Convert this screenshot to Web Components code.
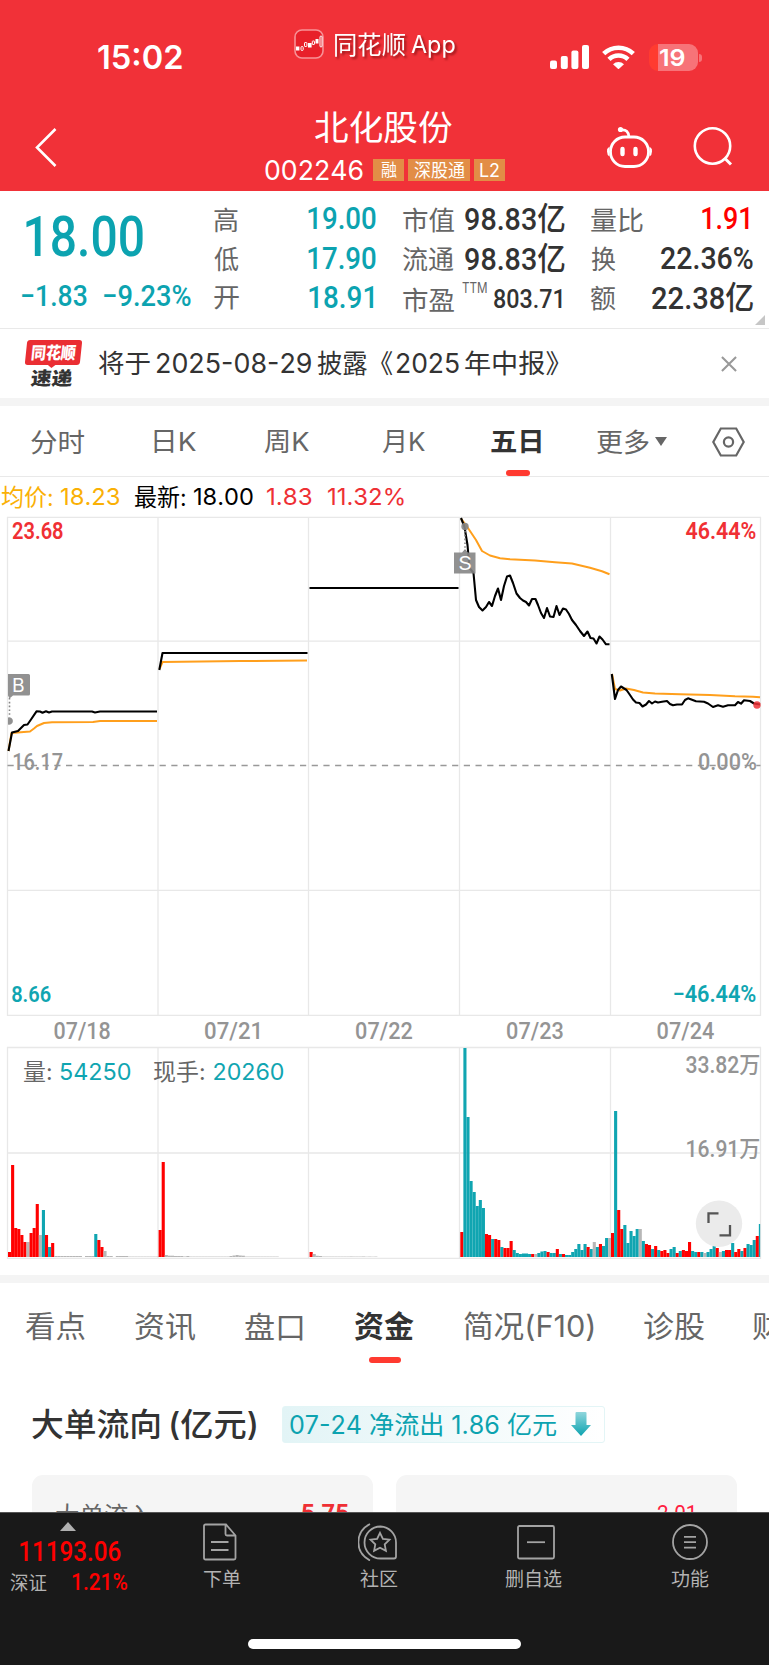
<!DOCTYPE html>
<html lang="zh-CN">
<head>
<meta charset="utf-8">
<title>北化股份 002246</title>
<style>
html,body{margin:0;padding:0;background:#fff}
body{width:769px;font-family:Inter,"Noto Sans CJK SC",sans-serif;color:#333}
</style>
</head>
<body>
<stock-app></stock-app>
<script>
const FONTS = {
  ui: 'Inter, "Noto Sans CJK SC", sans-serif',
  din: 'Roboto, "Noto Sans CJK SC", sans-serif'
};
const ctx = document.createElement('canvas').getContext('2d');
ctx.fontKerning = 'none';

function define(name, html) {
  const tpl = document.createElement('template');
  tpl.innerHTML = html;
  customElements.define(name, class extends HTMLElement {
    constructor() {
      super();
      this.attachShadow({mode: 'open'}).appendChild(tpl.content.cloneNode(true));
    }
  });
}

/* A single line of text whose box is exactly its ink: s = font size, w = ink width,
   f = face, b = weight, ml / mr / mt = margins. Colour is inherited. */
customElements.define('fit-text', class extends HTMLElement {
  connectedCallback() {
    if (this.shadowRoot) return;
    const a = (n, d) => this.getAttribute(n) ?? d;
    const size = +a('s', 24), weight = a('b', '400'), family = FONTS[a('f', 'ui')];
    const text = this.getAttribute('t');
    ctx.font = `${weight} ${size}px ${family}`;
    const m = ctx.measureText(text);
    const left = -m.actualBoundingBoxLeft, ink = m.actualBoundingBoxRight - left;
    const w = +a('w', ink), k = w / ink;
    const up = m.actualBoundingBoxAscent, h = up + m.actualBoundingBoxDescent;
    this.attachShadow({mode: 'open'}).innerHTML = `
      <style>
        :host{display:block;flex:none;width:${w}px;height:${h}px;margin-left:${a('ml', 0)}px;margin-right:${a('mr', 0)}px;margin-top:${a('mt', 0)}px}
        svg{display:block;overflow:visible}
        text{font:${weight} ${size}px ${family};font-kerning:none;fill:currentColor;white-space:pre}
      </style>
      <svg width="${w}" height="${h}"><text transform="translate(${-left * k} ${up}) scale(${k} 1)">${text}</text></svg>`;
    /* correct for any difference between the canvas advance and the laid-out one */
    const el = this.shadowRoot.querySelector('text');
    const adv = el.getComputedTextLength();
    if (adv) {
      const k2 = w / (ink + adv - m.width);
      el.setAttribute('transform', `translate(${-left * k2} ${up}) scale(${k2} 1)`);
    }
  }
});

define('status-bar', `
<style>
:host{display:flex;height:96px;color:#fff;align-items:flex-start}
.row{display:flex;align-items:center;height:30px}
.app{margin:29px 0 0 112px}
.app fit-text{filter:drop-shadow(2px 2px 1px rgba(80,0,0,.55))}
.time{margin:42px 0 0 98px}
.sys{margin:42px 0 0 95px}
svg{display:block;flex:none}
.bat{position:relative;width:49px;height:27px;border-radius:9px;margin-left:13.500px;display:flex;align-items:center;
 background:linear-gradient(90deg,#ff3b30 9px,#f77378 9px)}
.bat::after{content:"";position:absolute;left:50.5px;top:10px;width:2.5px;height:8px;border-radius:0 3px 3px 0;background:#f77378}
</style>
<div class="row time"><fit-text t="15:02" s="33" w="84" b="600"></fit-text></div>
<div class="row app">
 <svg width="30" height="30" viewBox="0 0 30 30"><rect x="1" y="1" width="28" height="28" rx="7" fill="#e8202a" stroke="#f79297" stroke-width="1.6"/>
 <g fill="#fff"><rect x="2" y="17.5" width="3.4" height="4"/><rect x="14" y="14" width="3.6" height="4.5"/><rect x="21.5" y="10" width="3" height="4.5"/></g>
 <g fill="none" stroke="#fff" stroke-width="1"><rect x="7" y="17.5" width="2.2" height="4" rx="1"/><rect x="10.5" y="13.5" width="2.4" height="4" rx=".6"/><rect x="18.3" y="12" width="2.2" height="3.5" rx=".6"/><rect x="26" y="7" width="2" height="11" rx="1"/></g></svg>
 <fit-text t="同花顺" s="25" w="70" ml="11" mt="0"></fit-text><fit-text t="App" s="24" w="44" ml="5.500" mt="5"></fit-text>
</div>
<div class="row sys">
 <svg width="39" height="24" viewBox="0 0 39 24" fill="#fff"><rect y="15.5" width="7" height="8.5" rx="2"/><rect x="10.8" y="11" width="7" height="13" rx="2"/><rect x="21.4" y="5.5" width="7" height="18.500" rx="2"/><rect x="32" width="7" height="24" rx="2"/></svg>
 <svg width="33" height="24" viewBox="0 0 33 24" style="margin-left:13.500px" fill="none" stroke="#fff" stroke-width="4.600"><path d="M1.700 8.600a21.500 21.500 0 0 1 29.600 0M7 14.300a13.600 13.600 0 0 1 19 0"/><path d="M11 19.200a8 8 0 0 1 11 0L16.500 24.300z" fill="#fff" stroke="none"/></svg>
 <div class="bat"><fit-text t="19" s="22.500" w="25" b="600" ml="11.500"></fit-text></div>
</div>`);

define('title-bar', `
<style>
:host{display:flex;height:95px;color:#fff}
svg{display:block;flex:none}
.back{margin:32px 0 0 35px}
.mid{width:260px;margin-left:206px;flex:none}
.t{display:flex;height:32px;margin-top:14.500px;align-items:center;justify-content:center;padding-right:19px}
.c{display:flex;height:22px;margin-top:16px;align-items:center}
.tag{height:22px;display:flex;align-items:center;justify-content:center;background:#e28d46;margin-left:4px;flex:none}
.bot{margin:30px 0 0 82.500px}
.find{margin:31px 0 0 41px}
</style>
<svg class="back" width="22" height="39" viewBox="0 0 22 39" fill="none" stroke="#fff" stroke-width="2.600"><path d="M20.500 1L2 19.500 20.500 38"/></svg>
<div class="mid">
 <div class="t"><fit-text t="北化股份" s="34.500" w="137"></fit-text></div>
 <div class="c"><fit-text t="002246" s="27.500" w="98" ml="2"></fit-text>
  <div class="tag" style="width:31px;margin-left:10px"><fit-text t="融" s="17" w="16"></fit-text></div>
  <div class="tag" style="width:62px"><fit-text t="深股通" s="18" w="51"></fit-text></div>
  <div class="tag" style="width:31px"><fit-text t="L2" s="18" w="19"></fit-text></div></div>
</div>
<svg class="bot" width="46" height="42" viewBox="0 0 46 42" fill="none" stroke="#fff" stroke-width="2.800"><rect x="4.500" y="11" width="38" height="29.500" rx="14.500"/><path d="M3.500 20.500q-2.500 1.500-2.500 5t2.500 5zM43.500 20.500q2.500 1.500 2.500 5t-2.500 5z" fill="#fff" stroke="none"/><path d="M15 4q7.500-1 8 7"/><circle cx="14.500" cy="3.500" r="2.600" fill="#fff" stroke="none"/><path d="M16.500 23v5M29.500 23v5" stroke-width="4.400" stroke-linecap="round"/></svg>
<svg class="find" width="40" height="40" viewBox="0 0 40 40" fill="none" stroke="#fff" stroke-width="2.600"><circle cx="19.500" cy="19" r="17.700"/><path d="M31.500 31l6.500 6.500" stroke-width="3"/></svg>`);

define('quote-panel', `
<style>
:host{display:flex;border-bottom:1.5px solid #e9e9e9;position:relative;color:#666;box-sizing:border-box;height:138px}
.main{width:214px;color:#0ca3b0}
.p{height:40px;margin:25px 0 0 26px;display:flex;align-items:center}
.d{height:22px;margin:28px 0 0 22px;display:flex;align-items:center}
.col{width:163px;padding-top:9px;margin-right:26px;flex:none}
.r{height:39.300px;display:flex;align-items:center;justify-content:space-between}
.up{color:#f00}.dn{color:#0ca3b0}.k{color:#333}
.corner{position:absolute;right:4px;bottom:3px;border:5px solid #c6c6c6;border-left-color:transparent;border-top-color:transparent}
</style>
<div class="main"><div class="p"><fit-text t="18.00" s="55" w="117" b="500" f="din"></fit-text></div>
<div class="d"><fit-text t="−1.83" s="29.500" w="65" b="500" f="din"></fit-text><fit-text t="−9.23%" s="29.500" w="87" b="500" f="din" ml="17"></fit-text></div></div>
<div class="col">
 <div class="r"><fit-text t="高" s="26" w="24"></fit-text><fit-text class="dn" t="19.00" s="31.500" w="68" b="500" f="din" mt="-3" mr="1"></fit-text></div>
 <div class="r"><fit-text t="低" s="26" w="25"></fit-text><fit-text class="dn" t="17.90" s="31.500" w="68" b="500" f="din" mt="-2" mr="1"></fit-text></div>
 <div class="r"><fit-text t="开" s="26" w="25"></fit-text><fit-text class="dn" t="18.91" s="31.500" w="64" b="500" f="din" mt="-3" mr="4.500"></fit-text></div>
</div>
<div class="col" style="width:162px">
 <div class="r"><fit-text t="市值" s="26" w="51"></fit-text><fit-text class="k" t="98.83亿" s="31.500" w="99.500" b="500" f="din" mt="-3" mr=".5"></fit-text></div>
 <div class="r"><fit-text t="流通" s="26" w="51"></fit-text><fit-text class="k" t="98.83亿" s="31.500" w="99.500" b="500" f="din" mt="-2" mr=".5"></fit-text></div>
 <div class="r"><fit-text t="市盈" s="26" w="51" mt="4"></fit-text><fit-text t="TTM" s="14" w="25" mt="-22" ml="1"></fit-text><fit-text class="k" t="803.71" s="26" w="67.500" b="500" f="din" mr="3.500"></fit-text></div>
</div>
<div class="col" style="margin-right:0;width:162.500px">
 <div class="r"><fit-text t="量比" s="26" w="52"></fit-text><fit-text class="up" t="1.91" s="31.500" w="46.500" b="500" f="din" mt="-3" mr="5"></fit-text></div>
 <div class="r"><fit-text t="换" s="26" w="25"></fit-text><fit-text class="k" t="22.36%" s="31" w="92" b="500" f="din" mt="-2" mr="1"></fit-text></div>
 <div class="r"><fit-text t="额" s="26" w="25"></fit-text><fit-text class="k" t="22.38亿" s="31.500" w="101" b="500" f="din" mt="-3" mr="1"></fit-text></div>
</div>
<div class="corner"></div>`);

define('news-strip', `
<style>
:host{display:flex;height:69px;align-items:center;border-bottom:8px solid #f4f4f4}
.logo{width:55px;margin-left:26px}
.a{height:25px;background:#ea2e33;border-radius:3px;transform:skewX(-6deg);display:flex;align-items:center;justify-content:center;color:#fff;position:relative}
.a::after{content:"";position:absolute;left:22px;top:24px;border:5px solid transparent;border-top:4px solid #ea2e33;border-bottom:0}
.b{display:flex;justify-content:center;transform:skewX(-6deg);margin-top:3px;padding-right:3px}
svg{display:block;margin-left:auto;margin-right:32px}
</style>
<div class="logo"><div class="a"><fit-text t="同花顺" s="17" w="44" b="900"></fit-text></div><div class="b"><fit-text t="速递" s="18.500" w="42" b="900"></fit-text></div></div>
<fit-text t="将于" s="26" w="51" ml="18" mt="-1"></fit-text><fit-text t="2025-08-29" s="26.500" w="155" ml="6" mt="-2"></fit-text><fit-text t="披露《" s="26" w="76" ml="6" mt="-1"></fit-text><fit-text t="2025" s="26.500" w="63" ml="3" mt="-2"></fit-text><fit-text t="年中报》" s="26" w="94" ml="6" mt="-1"></fit-text>
<svg width="16" height="16" viewBox="0 0 17 17" stroke="#999" stroke-width="2.200"><path d="M1 1l15 15M16 1L1 16"/></svg>`);

define('period-tabs', `
<style>
:host{display:flex;height:71px;align-items:center;border-bottom:1.5px solid #e9e9e9;color:#666;position:relative;box-sizing:border-box;padding-top:1px}
.tri{border:6px solid transparent;border-top:9px solid #666;border-bottom:0;margin-left:6px}
.on{color:#333;position:relative}
.bar{position:absolute;left:506px;bottom:0;width:24px;height:6px;border-radius:3px;background:#ff3a30}
svg{display:block;margin-left:44.500px}
</style>
<fit-text t="分时" s="26" w="53" ml="31"></fit-text><fit-text t="日K" s="26" w="42" ml="70"></fit-text><fit-text t="周K" s="26" w="45" ml="68"></fit-text><fit-text t="月K" s="26" w="43" ml="73"></fit-text><fit-text class="on" t="五日" s="26.500" w="50" b="700" ml="66"></fit-text><fit-text t="更多" s="26" w="52" ml="56"></fit-text><i class="tri"></i>
<svg width="33" height="30" viewBox="0 0 33 30" fill="none" stroke="#666" stroke-width="2.200"><path d="M8.800 1.500h15.400l7.500 13.500-7.500 13.500H8.800L1.300 15z"/><circle cx="16.500" cy="15" r="4.600"/></svg>
<div class="bar"></div>`);

define('legend-line', `
<style>:host{display:flex;height:39px;align-items:center;color:#000}</style>
<fit-text style="color:#fab005" t="均价:" s="23.500" w="51" ml=".5"></fit-text><fit-text style="color:#fab005" t="18.23" s="23.500" w="59" ml="9"></fit-text>
<fit-text t="最新:" s="23.500" w="50" ml="15"></fit-text><fit-text t="18.00" s="23.500" w="59" ml="9"></fit-text>
<fit-text style="color:#ee3034" t="1.83" s="23.500" w="45" ml="14.500"></fit-text><fit-text style="color:#ee3034" t="11.32%" s="23.500" w="76" ml="15.500"></fit-text>`);

/* Price and volume plots share one drawing surface, in page units. */
const V = { /* per day: [colour, height] for successive five-minute bars */
 d1:[8,'r5 r92 r29 r28 r22 r15 g15 r24 r29 r53 g22 t47 r22 t10 r14 g1 g1 g1 g1 g1 g1 g1 g1 g1 g0 g1 g1 g1 t23 r17 r10 g6 g1 g1 g0 g1 g1 g1 g1 g.4 g.4 g.4 g.4 g.4 g.4 g.4 g.4 g.4 g.4'],
 d2:[158.6,'r27 r95 g2 g1.3 g1.3 g1 g1 g1 g.5 g1 g.4 g.4 g.4 g.4 g.4 g.4 g.4 g.4 g.4 g.4 g.4 g.4 g.4 g1 g1.5 g2 g1.5 g1.3 g.4 g.4 g.4 g.4 g.4 g.4 g.4 g.4 g.4 g.4 g.4'],
 d3:[309.6,'r5 g3 g1.2 g1 g.4 g.4 g.4 g.4 g.4 g.4 g.4 g.4 g.4 g.5 g.4 g.4 g.4 g.5 g.3 g.4 g.3 g.4'],
 d4:[460.3,'r25 t209 t140 t76 t65 t51 t57 t49 r23 r22 t18 r18 r17 t10 r9 r9 r16 t7 t4 t3 t3.5 t3.5 t3 r3 g3 t4 t5.5 t6 r5 t4 t4 r8 t3 r3 t2 t2 t5 t8 t13 t7 t13 r10 t8 g15 t10 r13 t11 t19 g19'],
 d5:[611,'r24 t146 r47 r28 t32 t14 t26 t21 t28 g28 t16 r13 r12 t8 r11 t7 r6 r7 r4 t8 t10 r4 t6 r7 r6 r15 t6 t5 r5 t5 g4 t5 t8 t11 r9 g5 t6 r7 r7 t14 r5 r8 t6 r9 t13 t12 t17 r21 h33']
};
const C = {r:'#ff0000', t:'#10a5b1', g:'#b7b7b7', h:'#10a5b1'};
const bars = Object.values(V).map(([x, s]) => s.split(' ').map((b, i) =>
  `<rect x="${(x + i * 3.08).toFixed(2)}" y="${1257 - +b.slice(1)}" width="${b[0] === 'h' ? 1.3 : 3.1}" height="${b.slice(1)}" fill="${C[b[0]]}"/>`).join('')).join('');

/* SVG label fitted to ink width w, with its left ink edge at x and its baseline at y */
function label(t, x, y, w, size, fill, weight = 500, fam = 'din') {
  ctx.font = `${weight} ${size}px ${FONTS[fam]}`;
  const m = ctx.measureText(t), l = -m.actualBoundingBoxLeft, k = w / (m.actualBoundingBoxRight - l);
  return `<text transform="translate(${x - l * k} ${y}) scale(${k} 1)" fill="${fill}" style='font:${weight} ${size}px ${FONTS[fam]};font-kerning:none'>${t}</text>`;
}
const G = '#949494';
define('five-day-chart', `
<style>:host{display:block;height:759px}svg{display:block}</style>
<svg width="769" height="759" viewBox="0 516 769 759">
<g stroke="#e8e8e8" stroke-width="1.3" fill="none">
 <path d="M7.500 517.300H760.500V1015.300H7.500zM158 517V1015M308.500 517V1015M459.500 517V1015M610.500 517V1015M7.500 641.200H760.500M7.500 890.300H760.500"/>
 <path d="M7.500 1047.500H760.500V1258.300H7.500zM158 1047.500V1258M308.500 1047.500V1258M459.500 1047.500V1258M610.500 1047.500V1258M7.500 1153H760.500"/>
</g>
<path d="M7.500 765.500H760.500" stroke="#999" stroke-width="1.300" stroke-dasharray="6.200 5.500"/>
${label('23.68', 12, 539.3, 51.5, 23, '#f03034', 600)}${label('46.44%', 685.500, 539.3, 70, 23, '#f03034', 600)}
${label('16.17', 13, 770.300, 50, 23, G)}${label('0.00%', 699, 770.300, 57, 23, G)}
${label('8.66', 12, 1001.5, 39, 23, '#10a5b1', 600)}${label('−46.44%', 673.500, 1001.5, 82, 23, '#10a5b1', 600)}
${[['07/18',54.5,56],['07/21',205,54],['07/22',356,56.5],['07/23',507,56.5],['07/24',657.5,56.5]].map(([d, x, w]) => label(d, x, 1038.500, w, 23.5, G)).join('')}
<g fill="none" stroke-linejoin="round" stroke-linecap="butt">
 <g stroke="#ff9f1c" stroke-width="2">
  <path d="M8.500 751L11.500 733L30 731.500L34 728.500L37 726L44 723L52 722.200L93 722L100 721H157"/>
  <path d="M159.500 669L162.500 662L240 661L307 660.500"/>
  <path d="M461 518.500L468 528L476 540L482 551L490 555.500L500 558.200L510 559.300L535 560.500L555 562.300L572 563.500L590 567.800L602 571.300L609.500 574.300"/>
  <path d="M612 674L615 689L620 690.500L626 688.500L634 690L643 692.500L655 693.500L680 694.300L710 695L735 696.300L753 696.700L760 697.300"/>
 </g>
 <g stroke="#000" stroke-width="2.100">
  <path d="M8.500 751L12 732.500L18 731L21 728L24 725L27.500 724.500L31 719.500L36.500 711.300L40 711.500L42.500 712.700L46 711.300L49 712.500L52 711.500H92L95 712.500L100 711.500H157"/>
  <path d="M159.300 670L162.500 653H307.500"/><path d="M309.500 588H458.500"/>
  <path d="M461 518L464.500 527L467.500 545L469.500 568L473.500 573L476 600L479 607L482.500 610.500L486 607L489 602L492 606L495 596L498 588.500L501 600L504 586L507 576.500L510 575.500L513 583L516.500 593.500L520 598L523 600.500L526 602L529 605.500L532 599L535.500 599L538 605L541 613L544 618L547 608L550 616.500L553.500 617L556.500 606L559.500 615L563 608.500L566 609.500L569 614L572 620L576 625L580 631L584 636L587.500 631.500L590.500 638L593.500 638.500L596.500 643.500L599.500 636.500L602.500 639.500L606 644.300H609.500"/>
  <path d="M611.800 674L615 699L618 690L621 686.500L626.500 690L630 695L633 699.500L636 702.500L639.500 703L642.500 706.500L646 704.500L649 701L652 703.500L655 701.500L658 702.500L662 701.800L667 701L670 704L673 705.300L677 704.500L682 704.500L685 700L688 698.300L692 699.800L696 701.200L704 701.800L708 703.500L713 707L718 705.200L723 706.800L728 705.300L735 705.200L738 702L741 703.700L744 700.300L750 701L754 703.500L760 704.500"/>
 </g>
</g>
<circle cx="757" cy="705" r="3.700" fill="#ee3237" opacity=".85"/>
<g fill="#858585" fill-opacity=".9"><path d="M8 674h20.500a1.500 1.500 0 0 1 1.500 1.500v18.500a1.500 1.500 0 0 1-1.500 1.500H13l-3.500 3-1.500-3z"/><path d="M8 717.500a3.700 3.700 0 1 1 0 7z"/><path d="M454 552.500h8l3-3.500 3 3.500h7.500v21h-21.500z"/><circle cx="465" cy="526.500" r="3.700"/></g>
<path d="M9.500 698V716M465 531V551" stroke="#858585" stroke-width="1.600" stroke-dasharray="1.600 2.200"/>
${label('B', 13, 692, 11.500, 18.500, '#fff', 400, 'ui')}${label('S', 459.500, 570, 11.500, 18.500, '#fff', 400, 'ui')}
${bars}
${label('量:', 24, 1080.300, 27, 22.500, '#666', 400, 'ui')}${label('54250', 60, 1080.300, 71, 23, '#10a5b1', 400, 'ui')}
${label('现手:', 153, 1080.300, 51, 22.500, '#666', 400, 'ui')}${label('20260', 213.500, 1080.300, 70.500, 23, '#10a5b1', 400, 'ui')}
${label('33.82万', 685.500, 1073, 74, 23, G, 500)}${label('16.91万', 686.500, 1157.300, 73, 23, G, 500)}
<circle cx="719" cy="1223.700" r="23.200" fill="#ebebeb"/>
<path d="M708.500 1223V1213.300H718.500M730 1225V1235.300H719.500" fill="none" stroke="#555" stroke-width="2.300"/>
</svg>`);

define('section-tabs', `
<style>
:host{display:flex;height:88px;border-top:8px solid #f4f4f4;color:#666;position:relative;overflow:hidden}
.r{display:flex;height:86.500px;align-items:center}
.bar{position:absolute;left:368.500px;top:74px;width:32px;height:6px;border-radius:3px;background:#ff3a30}
.on{color:#333}
</style>
<div class="r"><fit-text t="看点" s="30" w="60" ml="25"></fit-text><fit-text t="资讯" s="30" w="61" ml="50"></fit-text><fit-text t="盘口" s="30" w="58" ml="49"></fit-text><fit-text class="on" t="资金" s="30" w="60" b="700" ml="51"></fit-text><fit-text t="简况(F10)" s="30" w="129.500" ml="50"></fit-text><fit-text t="诊股" s="30" w="60" ml="50"></fit-text><fit-text t="财务" s="30" w="60" ml="49"></fit-text></div>
<div class="bar"></div>`);

define('fund-flow', `
<style>
:host{display:block;height:141px;overflow:hidden;color:#333}
.h{display:flex;align-items:center;height:38px;margin-top:34px;padding-left:32px}
.tag{margin-left:25px;width:323px;height:37px;box-sizing:border-box;border:1px solid #e3f5f6;border-radius:3px;background:linear-gradient(90deg,#e2f4f6,#fff);color:#0ca3b0;display:flex;align-items:center;padding-left:7px}
svg{display:block;margin-left:15px}
.cards{display:flex;gap:23px;margin:32px 0 0 31.500px}
.card{width:341px;height:80px;border-radius:11px 11px 0 0;background:#f5f5f5;display:flex;box-sizing:border-box;padding:28px 25px 0 24px;justify-content:space-between;color:#666}
.red{color:#ef2f34}
</style>
<div class="h"><fit-text t="大单流向" s="32" w="128" b="500"></fit-text><fit-text t="(亿元)" s="32" w="85" b="500" ml="11" mr="1"></fit-text>
<div class="tag"><fit-text t="07-24 净流出 1.86 亿元" s="25" w="266"></fit-text><svg width="20" height="24" viewBox="0 0 20 24"><defs><linearGradient id="g" x2="0" y2="1"><stop stop-color="#8fd6dc"/><stop offset="1" stop-color="#0ca3b0"/></linearGradient></defs><path d="M5.500 0h9q1 0 1 1v12H20L10 24 0 13h4.500V1q0-1 1-1z" fill="url(#g)"/></svg></div></div>
<div class="cards"><div class="card"><fit-text t="大单流入" s="25" w="97"></fit-text><fit-text class="red" t="5.75" s="24" w="46" b="700" f="din" mt="1"></fit-text></div>
<div class="card" style="justify-content:flex-end;padding-right:42px"><fit-text class="red" style="color:#ff2040" t="2.01" s="22.500" w="36" f="din" mt="2" mr="1"></fit-text></div></div>`);

define('nav-item', `
<style>:host{display:flex;flex-direction:column;align-items:center;color:#b3b3b3;width:80px;flex:none}
.i{height:38px;display:flex;align-items:center;margin-bottom:8px}</style>
<div class="i"><slot name="icon"></slot></div><slot></slot>`);

define('bottom-nav', `
<style>
:host{display:block;height:153px;background:#191919;box-sizing:border-box;border-top:1px solid #555}
.r{display:flex;height:115px}
.idx{width:140px;color:#f00;flex:none}
.tri{width:0;border:8.500px solid transparent;border-bottom:9.500px solid #b0b0b0;border-top:0;margin:9px 0 0 60px}
.v{height:20px;margin:10px 0 0 20px}
.s{display:flex;align-items:center;height:20px;margin-top:11px;padding-left:10px}
nav-item{margin-top:9.500px}
svg{display:block;fill:none;stroke:#a3a3a3;stroke-width:1.8}
.home{width:273px;height:10.500px;border-radius:6px;background:#fff;margin:10.500px 0 0 248px}
</style>
<div class="r">
<div class="idx"><div class="tri"></div><div class="v"><fit-text t="11193.06" s="28" w="100.500" b="500" f="din"></fit-text></div>
<div class="s"><fit-text style="color:#b3b3b3" t="深证" s="19" w="37"></fit-text><fit-text t="1.21%" s="23" w="55" b="500" f="din" ml="24.500" mt="-2"></fit-text></div></div>
<nav-item style="margin-left:40px"><svg slot="icon" width="34" height="38" viewBox="0 0 34 38"><path d="M2.500 1.500H23l9.500 11V35q0 1.500-1.500 1.500H2.500Q1 36.500 1 35V3q0-1.500 1.500-1.500zM22.500 2v9q0 1.500 1.500 1.500h8.500M8 19h17.500M8 27h17.500"/></svg><fit-text t="下单" s="19" w="37" ml="4"></fit-text></nav-item>
<nav-item style="margin-left:77.500px"><svg slot="icon" width="39" height="38" viewBox="0 0 39 38"><path d="M12 1C-3.500 9-3.500 29.500 12 37.500M22.500 3.500a16 16 0 1 0 0 32H36q2 0 2-2V19.500a16 16 0 0 0-15.500-16z"/><path d="M22 9.800l2.900 6 6.600.9-4.800 4.600 1.200 6.600-5.900-3.200-5.900 3.200 1.200-6.600-4.800-4.600 6.600-.9z"/></svg><fit-text t="社区" s="19" w="38" ml="2"></fit-text></nav-item>
<nav-item style="margin-left:78px"><svg slot="icon" width="38" height="38" viewBox="0 0 38 38"><rect x="1" y="3" width="36" height="32.500" rx="1.500"/><path d="M10 19.200h18"/></svg><fit-text t="删自选" s="19" w="57" ml="-4"></fit-text></nav-item>
<nav-item style="margin-left:74px"><svg slot="icon" width="38" height="38" viewBox="0 0 38 38"><circle cx="19" cy="19" r="17"/><path d="M13 13.800h12M13 19.200h12M13 24.600h12"/></svg><fit-text t="功能" s="19" w="38"></fit-text></nav-item>
</div>
<div class="home"></div>`);

define('stock-app', `
<style>:host{display:block;width:769px;height:1665px;overflow:hidden;background:#fff}
header{background:#f13138;height:191px}</style>
<header><status-bar></status-bar><title-bar></title-bar></header>
<quote-panel></quote-panel><news-strip></news-strip><period-tabs></period-tabs><legend-line></legend-line>
<five-day-chart></five-day-chart><section-tabs></section-tabs><fund-flow></fund-flow><bottom-nav></bottom-nav>`);
</script>
</body>
</html>
